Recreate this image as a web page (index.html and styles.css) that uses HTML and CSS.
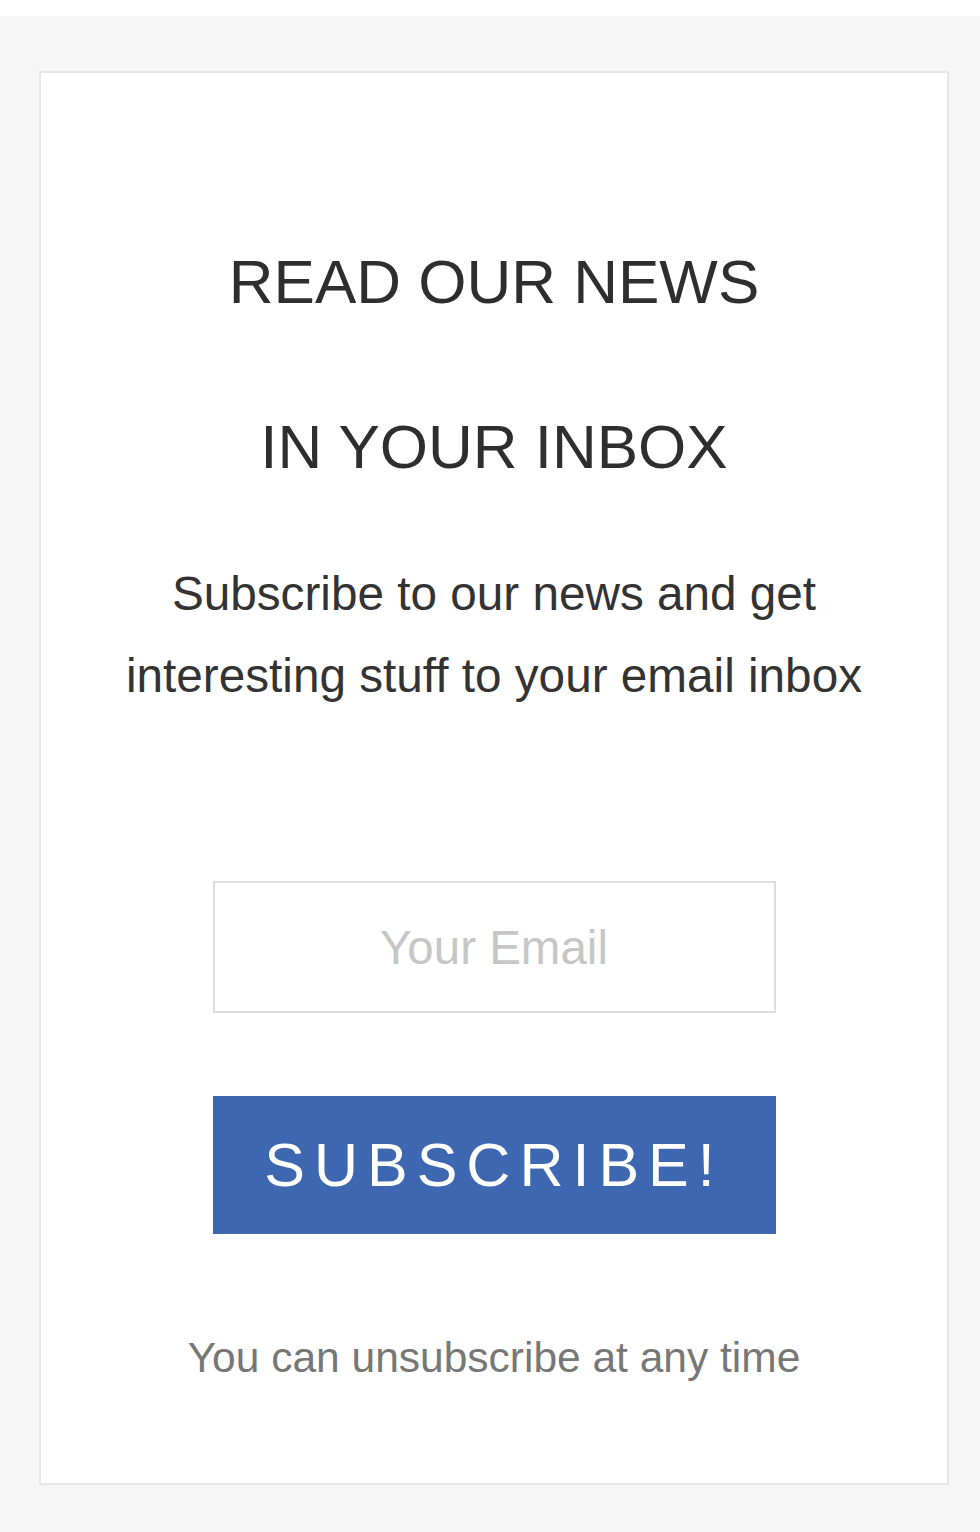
FILE: index.html
```html
<!DOCTYPE html>
<html lang="en">
<head>
    <meta charset="UTF-8">
    <meta name="viewport" content="width=device-width, initial-scale=1.0">
    <title>Newsletter</title>
    <link rel="stylesheet" href="styles.css">
</head>
<body>

<div class="page">
    <!-- Newsletter Box -->
    <div class="newsletter">
        <h1 class="newsletter-title">READ OUR NEWS<br>IN YOUR INBOX</h1>
        <p class="newsletter-text">Subscribe to our news and get<br>interesting stuff to your email inbox</p>

        <form class="newsletter-form">
            <input type="email" name="email" placeholder="Your Email">
            <button type="submit" class="btn-subscribe">SUBSCRIBE!</button>
        </form>

        <p class="newsletter-note">You can unsubscribe at any time</p>
    </div>
</div>

</body>
</html>
```

FILE: styles.css
```css
/* General Styling */
body {
    font-family: 'Liberation Sans', Arial, sans-serif;
    background-color: #fff;
    margin: 0;
}

.page {
    margin-top: 16px;
    background-color: #f6f6f6;
    padding: 55px 31px 47px 39px;
}

.newsletter {
    background: #fff;
    border: 2px solid #e6e6e6;
    text-align: center;
    padding: 126px 20px 101px;
}

.newsletter-title {
    margin: 0;
    font-size: 62px;
    font-weight: normal;
    line-height: 165px;
    color: #2e2e2e;
}

.newsletter-text {
    margin: 24px 0 0;
    font-size: 47.7px;
    line-height: 82px;
    color: #333;
}

.newsletter-form {
    display: flex;
    flex-direction: column;
    align-items: center;
    margin-top: 164px;
}

.newsletter-form input {
    box-sizing: border-box;
    width: 563px;
    height: 132px;
    border: 2px solid #ddd;
    font-family: inherit;
    font-size: 47.5px;
    text-align: center;
    color: #333;
    outline: none;
}

.newsletter-form input::placeholder {
    color: #c6c6c6;
}

.btn-subscribe {
    width: 563px;
    height: 138px;
    margin-top: 83px;
    background-color: #3d67b1;
    border: none;
    color: #fff;
    font-family: inherit;
    font-size: 61px;
    letter-spacing: 9px;
    cursor: pointer;
}

.newsletter-note {
    margin: 100px 0 0;
    font-size: 42.5px;
    color: #777;
}
```
